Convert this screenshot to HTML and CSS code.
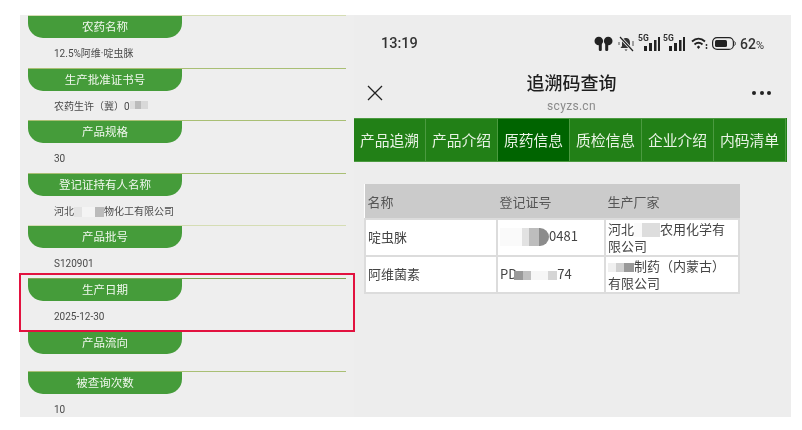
FILE: index.html
```html
<!DOCTYPE html>
<html lang="zh">
<head>
<meta charset="utf-8">
<title>追溯码查询</title>
<link rel="stylesheet" href="styles.css">
</head>
<body>
<main class="page">
  <section class="left">
    <div class="sec line-pale"><h3 class="pill">农药名称</h3><p class="val">12.5%阿维·啶虫脒</p></div>
    <div class="sec"><h3 class="pill">生产批准证书号</h3><p class="val">农药生许（冀）0<span class="mask m-a"></span></p></div>
    <div class="sec"><h3 class="pill">产品规格</h3><p class="val">30</p></div>
    <div class="sec"><h3 class="pill">登记证持有人名称</h3><p class="val">河北<span class="mask m-b"></span>物化工有限公司</p></div>
    <div class="sec line-pale"><h3 class="pill">产品批号</h3><p class="val">S120901</p></div>
    <div class="sec line-dark"><h3 class="pill">生产日期</h3><p class="val">2025-12-30</p></div>
    <div class="sec"><h3 class="pill">产品流向</h3><p class="val val-empty"></p></div>
    <div class="sec"><h3 class="pill">被查询次数</h3><p class="val">10</p></div>
    <div class="redbox"></div>
  </section>
  <section class="right">
    <div class="status">
      <span class="time">13:19</span>
      <span class="icons">
        <svg class="i-buds" width="19" height="15" viewBox="0 0 19 15"><circle cx="4.8" cy="5" r="4.300" fill="#222"/><rect x="4.800" y="4" width="3" height="11" rx="1.300" fill="#222"/><circle cx="14.200" cy="5" r="4.300" fill="#222"/><rect x="11.200" y="4" width="3" height="11" rx="1.300" fill="#222"/></svg>
        <svg class="i-bell" width="17" height="16" viewBox="0 0 17 16"><path d="M8 2c3 0 4 2.200 4 5v3l1.500 2h-11L4 10V7c0-2.800 1-5 4-5z" fill="#333"/><path d="M6.500 13.500h3L8 15z" fill="#333"/><path d="M2 1l13 14" stroke="#eee" stroke-width="3"/><path d="M2 1l13 14" stroke="#222" stroke-width="1.200"/><path d="M15 5v5M1 6v3" stroke="#555" stroke-width="1"/></svg>
        <span class="sig"><b class="g5">5G</b><svg width="16" height="15" viewBox="0 0 16 15"><rect x="0" y="10" width="3" height="5" fill="#222"/><rect x="5" y="7" width="3" height="8" fill="#222"/><rect x="10" y="4" width="2.500" height="11" fill="#222"/><rect x="14" y="1" width="2" height="14" fill="#222"/></svg></span>
        <span class="sig"><b class="g5">5G</b><svg width="16" height="15" viewBox="0 0 16 15"><rect x="0" y="10" width="3" height="5" fill="#222"/><rect x="5" y="7" width="3" height="8" fill="#222"/><rect x="10" y="4" width="2.500" height="11" fill="#222"/><rect x="14" y="1" width="2" height="14" fill="#222"/></svg></span>
        <svg class="i-wifi" width="17" height="13" viewBox="0 0 17 13"><path d="M1 4.500c4-3.600 9-3.600 13 0M3.500 7.500c2.600-2.300 5.400-2.300 8 0" fill="none" stroke="#222" stroke-width="1.900"/><path d="M5.800 10l1.700-1.500L9.200 10 7.500 12z" fill="#222"/><circle cx="15.500" cy="8" r=".9" fill="#222"/><circle cx="15.500" cy="11" r=".9" fill="#222"/></svg>
        <svg class="i-batt" width="24" height="13" viewBox="0 0 24 13"><rect x=".6" y=".6" width="20.800" height="11.800" rx="4.500" fill="none" stroke="#222" stroke-width="1.200"/><rect x="3" y="3" width="12" height="7" rx="1.500" fill="#222"/><path d="M22.500 4.500c1 .6 1 3.400 0 4" stroke="#222" fill="none"/></svg>
        <span class="pct">62<small>%</small></span>
      </span>
    </div>
    <header class="nav">
      <svg class="close" width="16" height="16" viewBox="0 0 16 16"><path d="M1 1l14 14M15 1L1 15" stroke="#222" stroke-width="1.300" fill="none"/></svg>
      <div class="titles">
        <h1>追溯码查询</h1>
        <p>scyzs.cn</p>
      </div>
      <span class="more"><i></i><i></i><i></i></span>
    </header>
    <nav class="tabs">
      <a class="tab">产品追溯</a>
      <a class="tab">产品介绍</a>
      <a class="tab on">原药信息</a>
      <a class="tab">质检信息</a>
      <a class="tab">企业介绍</a>
      <a class="tab">内码清单</a>
    </nav>
    <table class="grid">
      <colgroup><col class="c1"><col class="c2"><col class="c3"></colgroup>
      <thead><tr><th>名称</th><th>登记证号</th><th>生产厂家</th></tr></thead>
      <tbody>
        <tr><td>啶虫脒</td><td><span class="mask m-c"></span>0481</td><td>河北<span class="mask m-d"></span>农用化学有限公司</td></tr>
        <tr><td>阿维菌素</td><td>PD<span class="mask m-e"></span>74</td><td><span class="mask m-f"></span>制药（内蒙古）有限公司</td></tr>
      </tbody>
    </table>
  </section>
</main>
</body>
</html>
```
FILE: styles.css
```css
* { box-sizing: border-box; }
html, body { margin: 0; padding: 0; background: #fff; }
body { font-family: "Noto Sans CJK SC", "Noto Sans", sans-serif; color: #444; }
.page { display: flex; width: 802px; height: 430px; padding: 15px 11px 13px 20px; }

.left { position: relative; z-index: 1; width: 334px; background: #eee; padding: 0 8px; filter: blur(.3px); }
.sec { border-top: 1px solid #a9bf74; width: 318px; }
.line-pale { border-top-color: #d5ddb4; }
.line-dark { border-top-color: #7fa355; }
.pill {
  margin: 0; width: 154px; height: 22px; line-height: 21px;
  background: #459c3a; color: #f2f8ef;
  font-size: 11.5px; font-weight: 400; text-align: center;
  border-radius: 0 0 15px 15px;
}
.val {
  margin: 0; height: 29.6px; padding-left: 26px;
  font-family: Roboto, "Noto Sans CJK SC", sans-serif;
  font-size: 10px; line-height: 31px; color: #4a4a4a; white-space: nowrap;
}
.val-empty { height: 17px; }
.mask { display: inline-block; vertical-align: middle; }
.m-a { width: 18px; height: 8px; background: linear-gradient(90deg, #ddd 0 30%, #bbb 30% 60%, #d8d8d8 60%); margin-bottom: 3px; }
.m-b { width: 30px; height: 10px; background: linear-gradient(90deg, #e3e3e3 0 25%, #f4f4f4 25% 70%, #bbb 70%); }
.redbox {
  position: absolute; left: -1px; top: 258px; width: 336px; height: 59px;
  border: 2px solid #e2123f;
}

.right { width: 437px; background: #ededed; filter: blur(.3px); color: #222; }
.status { display: flex; align-items: center; justify-content: space-between; height: 57px; padding: 0 25px 0 27px; }
.time { font-family: Roboto, sans-serif; font-size: 14.5px; font-weight: 500; color: #333; }
.icons { display: flex; align-items: center; height: 16px; }
.i-buds { margin-right: 5px; }
.i-bell { margin-right: 3px; }
.sig { display: flex; align-items: flex-end; position: relative; width: 22px; height: 15px; margin-right: 3px; justify-content: flex-end; }
.g5 { position: absolute; left: 0; top: -2px; font: 700 8.500px/8px Roboto, sans-serif; color: #333; }
.i-wifi { margin: 0 4px 0 3px; }
.i-batt { margin-right: 4px; }
.pct { font-family: Roboto, sans-serif; font-size: 14px; font-weight: 500; color: #333; width: 26px; white-space: nowrap; }
.pct small { font-size: 11px; font-weight: 400; }

.nav { display: flex; align-items: center; justify-content: space-between; height: 46px; padding: 0 20px 0 13px; }
.close { margin-top: -5px; }
.titles { text-align: center; align-self: flex-start; margin-top: -1px; margin-left: 8px; }
.titles h1 { margin: 0 0 3px; font-size: 18px; font-weight: 500; line-height: 22px; color: #1e1e1e; }
.titles p { margin: 0; font: 12px/20px Roboto, sans-serif; letter-spacing: .3px; color: #8b8b8b; }
.more { display: flex; gap: 3.500px; margin-top: -4px; }
.more i { width: 4px; height: 4px; border-radius: 50%; background: #222; }

.tabs { display: grid; grid-template-columns: repeat(6, 72px); width: 433px; height: 44px; background: #228017; }
.tab {
  display: flex; align-items: center; justify-content: center; padding-bottom: 2px;
  color: #e9f3e5; font-size: 14.800px; border: 1px solid #4b9a40; border-left: 0; white-space: nowrap;
}
.on { background: #006400; }

.grid {
  margin: 22px 0 0 10px; width: 374px; table-layout: fixed;
  border-collapse: collapse; background: #fff;
  font-size: 13px; line-height: 17px; color: #444;
}
.c1 { width: 132px; } .c2 { width: 108px; } .c3 { width: 134px; }
.grid th { height: 34px; background: #cbcbcb; border: 1px solid #cbcbcb; font-weight: 400; text-align: left; padding: 0 2px; color: #555; }
.grid td { height: 37px; background: #fff; border: 2px solid #dcdcdc; padding: 0 2px 1px; vertical-align: middle; word-break: break-all; }
.m-c { width: 49px; height: 18px; background: linear-gradient(90deg, #fafafa 0 45%, #e2e2e2 45% 60%, #bdbdbd 60% 80%, #8c8c8c 80%); border-radius: 0 9px 9px 0; }
.m-d { width: 26px; height: 14px; background: linear-gradient(90deg, #fafafa 0 30%, #ddd 30%); }
.m-e { width: 43px; height: 9px; margin-left: -3px; background: linear-gradient(90deg, #999 0 20%, #c0c0c0 20% 40%, #f6f6f6 40% 80%, #d5d5d5 80%); }
.m-f { width: 26px; height: 9px; background: linear-gradient(90deg, #f0f0f0 0 30%, #d0d0d0 30% 60%, #999 60%); }
```
